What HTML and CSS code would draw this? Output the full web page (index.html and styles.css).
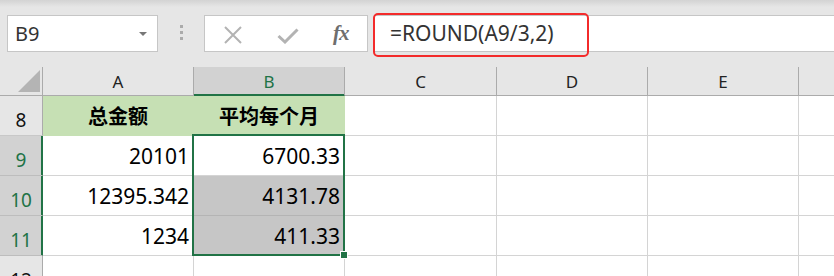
FILE: index.html
```html
<!DOCTYPE html>
<html lang="zh-CN">
<head>
  <meta charset="UTF-8">
  <title>ROUND</title>
  <link rel="stylesheet" href="styles.css">
</head>
<body>
  <div class="toolbar">
    <div class="namebox">
      <span>B9</span>
      <span class="caret"></span>
    </div>
    <div class="grip"><i></i><i></i><i></i></div>
    <div class="buttons">
      <svg class="icon" width="20" height="20" viewBox="0 0 20 20">
        <path d="M2 2 L18 18 M18 2 L2 18" stroke="#b3b3b3" stroke-width="2" fill="none"/>
      </svg>
      <svg class="icon" width="22" height="16" viewBox="0 0 22 16">
        <path d="M1.5 8 L8 14 L20.5 1.5" stroke="#b3b3b3" stroke-width="3" fill="none"/>
      </svg>
      <span class="fx">fx</span>
    </div>
    <div class="formula">=ROUND(A9/3,2)</div>
    <div class="mark"></div>
  </div>

  <div class="sheet">
    <div class="corner"><span class="tri"></span></div>
    <div class="hd">A</div>
    <div class="hd sel">B</div>
    <div class="hd wide">C</div>
    <div class="hd">D</div>
    <div class="hd">E</div>
    <div class="hd last"></div>

    <div class="rh">8</div>
    <div class="c title">总金额</div>
    <div class="c title">平均每个月</div>
    <div class="c"></div><div class="c"></div><div class="c"></div><div class="c last"></div>

    <div class="rh on">9</div>
    <div class="c num">20101</div>
    <div class="c num">6700.33</div>
    <div class="c"></div><div class="c"></div><div class="c"></div><div class="c last"></div>

    <div class="rh on">10</div>
    <div class="c num">12395.342</div>
    <div class="c num shade">4131.78</div>
    <div class="c"></div><div class="c"></div><div class="c"></div><div class="c last"></div>

    <div class="rh on">11</div>
    <div class="c num">1234</div>
    <div class="c num shade">411.33</div>
    <div class="c"></div><div class="c"></div><div class="c"></div><div class="c last"></div>

    <div class="rh">12</div>
    <div class="c"></div><div class="c"></div><div class="c"></div><div class="c"></div><div class="c"></div><div class="c last"></div>

    <div class="selection"><span class="handle"></span></div>
  </div>
</body>
</html>
```

FILE: styles.css
```css
html, body {
  margin: 0;
  height: 276px;
  overflow: hidden;
}
body {
  font-family: "Noto Sans", "Noto Sans CJK SC", sans-serif;
  background: #e6e6e6;
  color: #000;
}

/* formula toolbar */
.toolbar {
  position: relative;
  display: flex;
  align-items: flex-start;
  height: 67px;
  padding-top: 15px;
  box-sizing: border-box;
  background: linear-gradient(#d3d3d3, #e6e6e6 7px);
}
.namebox {
  margin-left: 7px;
  width: 151px;
  height: 37px;
  box-sizing: border-box;
  background: #fff;
  border: 1px solid #c6c6c6;
  display: flex;
  align-items: center;
  justify-content: space-between;
  padding: 0 10px 0 7px;
  font-size: 20px;
  color: #333;
}
.caret {
  width: 0;
  height: 0;
  border-left: 4px solid transparent;
  border-right: 4px solid transparent;
  border-top: 4px solid #777;
  margin-top: 1px;
}
.grip {
  width: 46px;
  display: flex;
  flex-direction: column;
  align-items: center;
  gap: 3px;
  padding-top: 10px;
}
.grip i {
  width: 3px;
  height: 3px;
  background: #ababab;
}
.buttons {
  width: 164px;
  height: 37px;
  box-sizing: border-box;
  background: #fff;
  border: 1px solid #c6c6c6;
  display: flex;
  align-items: center;
  padding-left: 18px;
}
.buttons .icon:first-child {
  margin-top: 2px;
  margin-right: 34px;
}
.buttons .icon:nth-child(2) {
  margin-top: 4px;
  margin-right: 34px;
}
.fx {
  font-family: "Liberation Serif", serif;
  font-style: italic;
  font-weight: bold;
  font-size: 21px;
  color: #6e6e6e;
  letter-spacing: -1px;
}
.formula {
  flex: 1;
  margin-left: 6px;
  height: 37px;
  box-sizing: border-box;
  background: #fff;
  border: 1px solid #c6c6c6;
  border-right: none;
  padding-left: 15px;
  font-size: 21px;
  line-height: 34px;
  color: #333;
}
.mark {
  position: absolute;
  left: 373px;
  top: 13px;
  width: 216px;
  height: 44px;
  box-sizing: border-box;
  border: 2px solid #f32b2b;
  border-radius: 5px;
}

/* sheet grid */
.sheet {
  position: relative;
  display: grid;
  grid-template-columns: 43px 151px 151px 152px 151px 151px 1fr;
  grid-template-rows: 29px repeat(5, 40px);
}
.sheet > div {
  box-sizing: border-box;
}
.corner {
  border-right: 1px solid #ababab;
  border-bottom: 1px solid #ababab;
  position: relative;
}
.tri {
  position: absolute;
  right: 2px;
  bottom: 3px;
  width: 0;
  height: 0;
  border-left: 22px solid transparent;
  border-bottom: 22px solid #b4b4b4;
}
.hd {
  background: #e6e6e6;
  border-right: 1px solid #ababab;
  border-bottom: 1px solid #ababab;
  display: flex;
  align-items: center;
  justify-content: center;
  font-size: 17px;
  color: #222;
}
.hd.sel {
  background: #d2d2d2;
  color: #217346;
  border-bottom-color: #217346;
  box-shadow: inset 0 -1px 0 #217346;
}
.hd.last, .c.last {
  border-right: none;
}
.rh {
  background: #e6e6e6;
  border-right: 1px solid #ababab;
  border-bottom: 1px solid #c8c8c8;
  display: flex;
  align-items: center;
  justify-content: center;
  padding-top: 9px;
  font-size: 19px;
  color: #111;
}
.rh.on {
  background: #d2d2d2;
  color: #217346;
  border-right-color: #217346;
  box-shadow: inset -1px 0 0 #217346;
  border-bottom-color: #bdbdbd;
}
.c {
  background: #fff;
  border-right: 1px solid #d4d4d4;
  border-bottom: 1px solid #d4d4d4;
}
.c.title {
  background: #c6e0b4;
  border-color: #c6e0b4;
  display: flex;
  align-items: center;
  justify-content: center;
  font-family: "Noto Sans CJK SC", sans-serif;
  font-weight: bold;
  font-size: 20px;
}
.c.num {
  display: flex;
  align-items: center;
  justify-content: flex-end;
  padding-right: 4px;
  font-size: 21px;
}
.c.shade {
  background: #c6c6c6;
  border-bottom-color: #b4b4b4;
}
.selection {
  position: absolute;
  left: 192px;
  top: 67px;
  width: 153px;
  height: 122px;
  border: 2px solid #217346;
}
.handle {
  position: absolute;
  right: -5px;
  bottom: -5px;
  width: 6px;
  height: 6px;
  background: #217346;
  border: 1px solid #fff;
}
```
